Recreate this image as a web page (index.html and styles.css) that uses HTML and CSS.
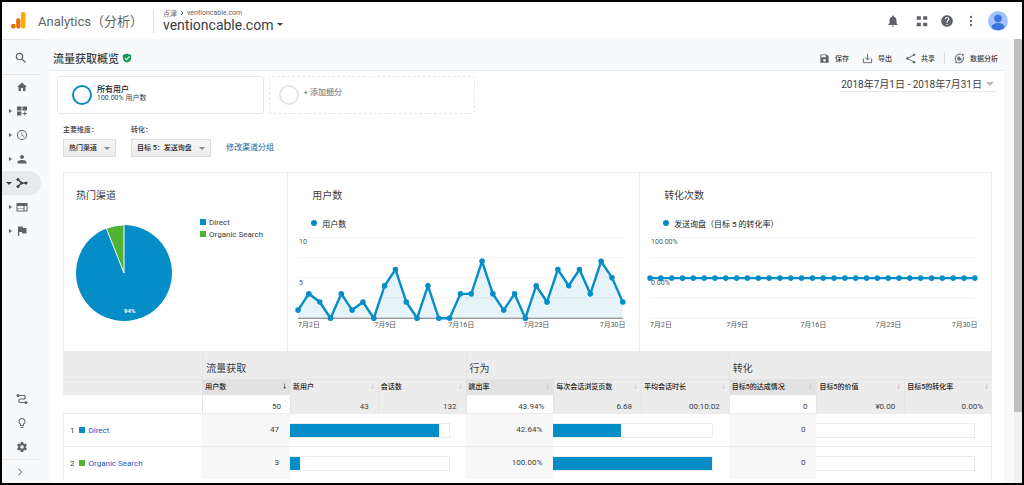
FILE: index.html
```html
<!DOCTYPE html>
<html lang="zh-CN">
<head>
    <meta charset="UTF-8">
    <meta name="viewport" content="width=device-width, initial-scale=1.0">
    <title>Analytics（分析）</title>
    <link rel="stylesheet" href="styles.css">
</head>
<body>

<header class="topbar">
    <svg class="logo" viewBox="0 0 32 36" aria-hidden="true">
        <rect x="21" y="0" width="10" height="35" rx="5" fill="#f9ab00"/>
        <rect x="11" y="13" width="9" height="22" rx="4" fill="#e37400"/>
        <circle cx="5" cy="30" r="5" fill="#e37400"/>
    </svg>
    <span class="product">Analytics（分析）</span>
    <div class="account">
        <div class="crumbs">点津
            <svg class="crumb-arrow" viewBox="0 0 8 8"><path d="M2 0l4 4-4 4" fill="none" stroke="#5f6368" stroke-width="1.6"/></svg>
            ventioncable.com</div>
        <button class="property">ventioncable.com <span class="caret"></span></button>
    </div>
    <div class="top-actions">
        <button class="icon-btn bell" aria-label="通知"><svg viewBox="0 0 24 24"><path d="M12 22c1.100 0 2-.9 2-2h-4c0 1.100.89 2 2 2zm6-6v-5c0-3.070-1.640-5.640-4.500-6.320V4c0-.83-.67-1.500-1.500-1.500s-1.500.67-1.500 1.500v.68C7.630 5.360 6 7.920 6 11v5l-2 2v1h16v-1l-2-2z"/></svg></button>
        <button class="icon-btn" aria-label="应用"><svg viewBox="0 0 24 24"><path d="M3 4h7v6H3zM14 4h7v6h-7zM3 15h7v6H3zM14 15h7v6h-7z"/></svg></button>
        <button class="icon-btn" aria-label="帮助"><svg viewBox="0 0 24 24"><path d="M12 2C6.480 2 2 6.480 2 12s4.480 10 10 10 10-4.480 10-10S17.520 2 12 2zm1 17h-2v-2h2v2zm2.070-7.750l-.9.920C13.450 12.900 13 13.500 13 15h-2v-.5c0-1.100.45-2.100 1.170-2.830l1.240-1.260c.37-.36.59-.86.59-1.410 0-1.100-.9-2-2-2s-2 .9-2 2H8c0-2.210 1.790-4 4-4s4 1.790 4 4c0 .88-.36 1.680-.93 2.250z"/></svg></button>
        <button class="icon-btn narrow" aria-label="更多"><svg viewBox="0 0 24 24"><circle cx="12" cy="4" r="2.300"/><circle cx="12" cy="12" r="2.300"/><circle cx="12" cy="20" r="2.300"/></svg></button>
        <button class="avatar" aria-label="账号">
            <svg viewBox="0 0 40 40"><circle cx="20" cy="20" r="20" fill="#a1c2fa"/><circle cx="20" cy="15" r="7.500" fill="#3b73e0"/><path d="M7 33c0-6 6-9 13-9s13 3 13 9c-3 4-8 5-13 5s-10-1-13-5z" fill="#3b73e0"/></svg>
        </button>
    </div>
</header>

<div class="layout">
    <nav class="sidebar">
        <a class="search" href="#" aria-label="搜索"><svg viewBox="0 0 24 24"><path d="M15.500 14h-.79l-.28-.27A6.470 6.470 0 0 0 16 9.500 6.500 6.500 0 1 0 9.500 16c1.610 0 3.090-.59 4.230-1.570l.27.28v.79l5 4.990L20.490 19l-4.990-5zm-6 0C7.010 14 5 11.990 5 9.500S7.010 5 9.500 5 14 7.010 14 9.500 11.990 14 9.500 14z"/></svg></a>
        <ul class="menu">
            <li><a href="#" aria-label="首页"><span></span><svg viewBox="0 0 24 24"><path d="M10 20v-6h4v6h5v-8h3L12 3 2 12h3v8z"/></svg></a></li>
            <li><a href="#" aria-label="自定义"><span class="arrow"></span><svg viewBox="0 0 24 24"><path d="M2 3h9v8H2zM13 3h9v8h-9zM2 13h9v8H2zM16.500 13h2v3h3v2h-3v3h-2v-3h-3v-2h3z"/></svg></a></li>
            <li><a href="#" aria-label="实时"><span class="arrow"></span><svg viewBox="0 0 24 24"><path d="M12 2a10 10 0 1 0 0 20 10 10 0 0 0 0-20zm0 18a8 8 0 1 1 0-16 8 8 0 0 1 0 16zm.5-13H11v6l5.200 3.200.8-1.300-4.500-2.700z"/></svg></a></li>
            <li><a href="#" aria-label="受众群体"><span class="arrow"></span><svg viewBox="0 0 24 24"><path d="M12 12c2.210 0 4-1.790 4-4s-1.790-4-4-4-4 1.790-4 4 1.790 4 4 4zm0 2c-3 0-9 1.340-9 4v3h18v-3c0-2.660-6-4-9-4z"/></svg></a></li>
            <li><a class="active" href="#" aria-label="流量获取"><span class="arrow open"></span><svg viewBox="0 0 24 24"><path d="M4 5l7 7-7 7M11 12h9" fill="none" stroke="#3c4043" stroke-width="2.500"/><circle cx="4" cy="5" r="3"/><circle cx="4" cy="19" r="3"/><circle cx="11" cy="12" r="3"/><circle cx="20" cy="12" r="3"/></svg></a></li>
            <li><a href="#" aria-label="行为"><span class="arrow"></span><svg viewBox="0 0 24 24"><path d="M1 4v17h22V4zm14 15H3v-4h12zm0-5H3v-4h12zm6 5h-4v-9h4z" fill-rule="evenodd"/></svg></a></li>
            <li><a href="#" aria-label="转化"><span class="arrow"></span><svg viewBox="0 0 24 24"><path d="M14 6l-.5-3H4v19h2.500v-8H12l.5 3H21V6z"/></svg></a></li>
        </ul>
        <ul class="menu menu-bottom">
            <li><a href="#" aria-label="归因"><span></span><svg viewBox="0 0 24 24"><path d="M4 5h11a3.500 3.500 0 0 1 0 7H9a3.500 3.500 0 0 0 0 7h11" fill="none" stroke="#5f6368" stroke-width="2.400"/><circle cx="4" cy="5" r="3"/><circle cx="20" cy="19" r="3"/></svg></a></li>
            <li><a href="#" aria-label="发现"><span></span><svg viewBox="0 0 24 24"><path d="M9 21c0 .55.45 1 1 1h4c.55 0 1-.45 1-1v-1H9v1zm3-19C8.140 2 5 5.140 5 9c0 2.380 1.190 4.470 3 5.740V17c0 .55.45 1 1 1h6c.55 0 1-.45 1-1v-2.260c1.810-1.270 3-3.360 3-5.740 0-3.860-3.140-7-7-7zm2.850 11.100l-.85.6V16h-4v-2.300l-.85-.6A5 5 0 0 1 7 9c0-2.760 2.240-5 5-5s5 2.240 5 5c0 1.630-.8 3.160-2.150 4.100z"/></svg></a></li>
            <li><a href="#" aria-label="管理"><span></span><svg viewBox="0 0 24 24"><path d="M19.430 12.980c.04-.32.07-.64.07-.98s-.03-.66-.07-.98l2.110-1.650c.19-.15.24-.42.12-.64l-2-3.460c-.12-.22-.39-.3-.61-.22l-2.490 1c-.52-.4-1.080-.73-1.690-.98l-.38-2.650A.49.49 0 0 0 14 2h-4c-.25 0-.46.18-.49.42l-.38 2.650c-.61.25-1.170.59-1.690.98l-2.490-1c-.23-.09-.49 0-.61.22l-2 3.460c-.13.22-.07.49.12.64l2.110 1.650c-.04.32-.07.65-.07.98s.03.66.07.98l-2.110 1.650c-.19.15-.24.42-.12.64l2 3.460c.12.22.39.3.61.22l2.490-1c.52.4 1.080.73 1.690.98l.38 2.650c.03.24.24.42.49.42h4c.25 0 .46-.18.49-.42l.38-2.650c.61-.25 1.170-.59 1.690-.98l2.490 1c.23.09.49 0 .61-.22l2-3.460c.12-.22.07-.49-.12-.64zM12 15.500a3.500 3.500 0 1 1 0-7 3.500 3.500 0 0 1 0 7z"/></svg></a></li>
        </ul>
        <button class="expand" aria-label="展开"><svg viewBox="0 0 24 24"><path d="M8 4l8 8-8 8" fill="none" stroke="#80868b" stroke-width="2.500"/></svg></button>
    </nav>

    <main class="main">
        <div class="titlebar">
            <h1>流量获取概览</h1>
            <svg class="shield" viewBox="0 0 24 24"><path d="M12 1L2 5v7c0 5.500 4.300 9.700 10 11 5.700-1.300 10-5.500 10-11V5z" fill="#0f9d58"/><path d="M7 12l4 4 7-8" fill="none" stroke="#fff" stroke-width="2.500"/></svg>
            <div class="tools">
                <button><svg viewBox="0 0 24 24"><path d="M17 3H3v18h18V7zm-5 16a3 3 0 1 1 0-6 3 3 0 0 1 0 6zm3-10H5V5h10z"/></svg>保存</button>
                <button><svg viewBox="0 0 24 24"><path d="M3 12v9h18v-9M12 2v13M7 10l5 5 5-5" fill="none" stroke="#5f6368" stroke-width="2"/></svg>导出</button>
                <button><svg viewBox="0 0 24 24"><path d="M20 4L5 12l15 8" fill="none" stroke="#5f6368" stroke-width="2"/><circle cx="20" cy="4" r="2.600"/><circle cx="5" cy="12" r="2.600"/><circle cx="20" cy="20" r="2.600"/></svg>共享</button>
                <button class="insights"><svg viewBox="0 0 24 24"><path d="M4 17a10 10 0 0 1 12-14M20 8A10 10 0 0 1 8 21" fill="none" stroke="#5f6368" stroke-width="2.200"/><path d="M12 7a5 5 0 1 0 5 5h-3a2 2 0 1 1-2-2z"/><circle cx="12" cy="12" r="2.500"/><circle cx="19" cy="4" r="2.200"/><circle cx="5" cy="20" r="2.200"/></svg>数据分析</button>
            </div>
        </div>

        <div class="panel">
            <div class="segments">
                <button class="segment">
                    <span class="ring"></span>
                    <span class="segment-text"><b>所有用户</b><small>100.00% 用户数</small></span>
                </button>
                <button class="segment segment-add">
                    <span class="ring"></span>
                    <span class="segment-text">+ 添加细分</span>
                </button>
                <button class="date-range">2018年7月1日 - 2018年7月31日 <span class="caret"></span></button>
            </div>

            <div class="filters">
                <div class="filter">
                    <label for="dimension">主要维度：</label>
                    <div class="select"><select id="dimension"><option>热门渠道</option></select></div>
                </div>
                <div class="filter">
                    <label for="goal">转化：</label>
                    <div class="select"><select id="goal"><option>目标 5：发送询盘</option></select></div>
                </div>
                <a href="#">修改渠道分组</a>
            </div>

            <div class="cards">
                <section class="card">
                    <h2>热门渠道</h2>
                    <div class="pie-row">
                        <svg class="pie" viewBox="0 0 96 96">
                            <circle cx="48" cy="48" r="48" fill="#058dc7"/>
                            <path d="M48 48L30.300 3.400A48 48 0 0 1 48 0z" fill="#50b432" stroke="#fff" stroke-width="1"/>
                            <text x="48" y="88">94%</text>
                        </svg>
                        <ul class="pie-legend">
                            <li><span class="swatch direct"></span>Direct</li>
                            <li><span class="swatch organic"></span>Organic Search</li>
                        </ul>
                    </div>
                </section>

                <section class="card">
                    <h2>用户数</h2>
                    <p class="legend"><span class="dot"></span>用户数</p>
                    <svg class="chart" viewBox="0 0 336 100">
                        <defs>
                            <marker id="point" markerUnits="userSpaceOnUse" markerWidth="6" markerHeight="6" refX="3" refY="3"><circle cx="3" cy="3" r="2.800" fill="#058dc7"/></marker>
                        </defs>
                        <path class="grid" d="M6 5.500H330M6 25.500H330M6 45.500H330M6 65.500H330"/>
                        <path class="area" d="M6 86V77.900L16.800 61.700 27.600 69.800 38.400 86 49.200 61.700 60 77.900 70.800 69.800 81.600 86 92.400 53.600 103.200 37.400 114 69.800 124.800 86 135.600 53.600 146.400 86 157.200 86 168 61.700 178.800 61.700 189.600 29.300 200.400 61.700 211.200 77.900 222 61.700 232.800 86 243.600 53.600 254.400 69.800 265.200 37.400 276 53.600 286.800 37.400 297.600 61.700 308.400 29.300 319.200 45.500 330 69.800V86z"/>
                        <path class="axis" d="M6 86H330"/>
                        <polyline class="line" points="6,77.900 16.800,61.700 27.600,69.800 38.400,86 49.200,61.700 60,77.900 70.800,69.800 81.600,86 92.400,53.600 103.200,37.400 114,69.800 124.800,86 135.600,53.600 146.400,86 157.200,86 168,61.700 178.800,61.700 189.600,29.300 200.400,61.700 211.200,77.900 222,61.700 232.800,86 243.600,53.600 254.400,69.800 265.200,37.400 276,53.600 286.800,37.400 297.600,61.700 308.400,29.300 319.200,45.500 330,69.800"/>
                        <text x="7" y="12">10</text>
                        <text x="7" y="53">5</text>
                        <text x="6" y="95">7月2日</text>
                        <text x="82" y="95">7月9日</text>
                        <text x="156" y="95">7月16日</text>
                        <text x="231" y="95">7月23日</text>
                        <text x="307" y="95">7月30日</text>
                    </svg>
                </section>

                <section class="card">
                    <h2>转化次数</h2>
                    <p class="legend"><span class="dot"></span>发送询盘（目标 5 的转化率）</p>
                    <svg class="chart" viewBox="0 0 336 100">
                        <path class="grid" d="M6 5.500H330M6 25.500H330M6 45.500H330M6 65.500H330M6 86H330"/>
                        <polyline class="line" points="6,46 16.800,46 27.600,46 38.400,46 49.200,46 60,46 70.800,46 81.600,46 92.400,46 103.200,46 114,46 124.800,46 135.600,46 146.400,46 157.200,46 168,46 178.800,46 189.600,46 200.400,46 211.200,46 222,46 232.800,46 243.600,46 254.400,46 265.200,46 276,46 286.800,46 297.600,46 308.400,46 319.200,46 330,46"/>
                        <text x="7" y="12">100.00%</text>
                        <text x="7" y="53">0.00%</text>
                        <text x="6" y="95">7月2日</text>
                        <text x="82" y="95">7月9日</text>
                        <text x="156" y="95">7月16日</text>
                        <text x="231" y="95">7月23日</text>
                        <text x="307" y="95">7月30日</text>
                    </svg>
                </section>
            </div>

            <table class="report">
                <colgroup>
                    <col class="col-name">
                    <col><col><col><col><col><col><col><col><col>
                </colgroup>
                <thead>
                    <tr class="groups">
                        <td></td>
                        <th colspan="3">流量获取</th>
                        <th colspan="3">行为</th>
                        <th colspan="3">转化</th>
                    </tr>
                    <tr class="heads">
                        <td></td>
                        <th class="sorted"><span>用户数<i class="on">🠗</i></span></th>
                        <th><span>新用户<i>🠗</i></span></th>
                        <th><span>会话数<i>🠗</i></span></th>
                        <th class="sorted"><span>跳出率<i>🠗</i></span></th>
                        <th><span>每次会话浏览页数<i>🠗</i></span></th>
                        <th><span>平均会话时长<i>🠗</i></span></th>
                        <th class="sorted"><span>目标5的达成情况<i>🠗</i></span></th>
                        <th><span>目标5的价值<i>🠗</i></span></th>
                        <th><span>目标5的转化率<i>🠗</i></span></th>
                    </tr>
                </thead>
                <tbody>
                    <tr class="totals">
                        <td class="lead"></td>
                        <td class="lead">50</td>
                        <td>43</td>
                        <td>132</td>
                        <td class="lead">43.94%</td>
                        <td>6.68</td>
                        <td>00:10:02</td>
                        <td class="lead">0</td>
                        <td>¥0.00</td>
                        <td>0.00%</td>
                    </tr>
                    <tr class="row">
                        <td class="name"><span>1</span><span class="swatch direct"></span><a href="#">Direct</a></td>
                        <td class="value">47</td>
                        <td colspan="2"><div class="bar"><div class="fill" style="width: 94%"></div></div></td>
                        <td class="value">42.64%</td>
                        <td colspan="2"><div class="bar"><div class="fill" style="width: 42.64%"></div></div></td>
                        <td class="value">0</td>
                        <td colspan="2"><div class="bar"></div></td>
                    </tr>
                    <tr class="row">
                        <td class="name"><span>2</span><span class="swatch organic"></span><a href="#">Organic Search</a></td>
                        <td class="value">3</td>
                        <td colspan="2"><div class="bar"><div class="fill" style="width: 6%"></div></div></td>
                        <td class="value">100.00%</td>
                        <td colspan="2"><div class="bar"><div class="fill" style="width: 100%"></div></div></td>
                        <td class="value">0</td>
                        <td colspan="2"><div class="bar"></div></td>
                    </tr>
                </tbody>
            </table>
        </div>
    </main>

    <div class="scrollbar"><div class="thumb"></div></div>
</div>

</body>
</html>
```
FILE: styles.css
```css
* {
    box-sizing: border-box;
}
body {
    margin: 0;
    height: 100vh;
    border: 2px solid #000;
    display: flex;
    flex-direction: column;
    overflow: hidden;
    background: #fff;
    color: #3c4043;
    font-family: Roboto, "Noto Sans CJK SC", sans-serif;
    font-size: 8px;
}
button {
    border: 0;
    padding: 0;
    background: none;
    color: inherit;
    font: inherit;
    white-space: nowrap;
}
a {
    text-decoration: none;
}
ul {
    margin: 0;
    padding: 0;
    list-style: none;
}
h1, h2, p {
    margin: 0;
}
svg {
    display: block;
    flex: none;
    fill: #5f6368;
}
.caret {
    display: inline-block;
    border: 3px solid transparent;
    border-top-color: currentColor;
    border-bottom: 0;
}

/* top bar */
.topbar {
    flex: none;
    height: 37px;
    display: flex;
    align-items: center;
    padding: 0 14px 0 9px;
}
.logo {
    width: 15px;
    height: 17px;
}
.product {
    margin-left: 12px;
    width: 115px;
    font-size: 13px;
    color: #5f6368;
    white-space: nowrap;
}
.account {
    border-left: 1px solid #e0e0e0;
    padding-left: 9px;
}
.crumbs {
    display: flex;
    align-items: center;
    gap: 3px;
    height: 8px;
    font-size: 7px;
    color: #5f6368;
}
.crumb-arrow {
    width: 4px;
    height: 4px;
}
.property {
    display: flex;
    align-items: center;
    gap: 4px;
    font-size: 14px;
    line-height: 16px;
}
.top-actions {
    margin-left: auto;
    display: flex;
    align-items: center;
    gap: 11px;
}
.icon-btn svg {
    width: 14px;
    height: 14px;
}
.bell {
    margin-right: 4px;
}
.narrow svg {
    width: 12px;
    height: 12px;
}
.avatar svg {
    width: 20px;
    height: 20px;
}

.layout {
    flex: 1;
    min-height: 0;
    display: flex;
    background: #f8f9fb;
}

/* side navigation */
.sidebar {
    flex: none;
    width: 39px;
    margin-right: 10px;
    display: flex;
    flex-direction: column;
    border-top: 1px solid #e4e4e4;
}
.search {
    height: 35px;
    padding: 11px 12px;
    border-bottom: 1px solid #e4e4e4;
}
.search svg {
    width: 14px;
    height: 14px;
}
.menu a {
    height: 24px;
    display: grid;
    grid-template-columns: 10px 12px;
    gap: 4px;
    align-items: center;
}
.menu a.active {
    background: #e8eaed;
    border-radius: 0 12px 12px 0;
}
.menu svg {
    width: 12px;
    height: 12px;
}
.active svg {
    fill: #3c4043;
}
.arrow {
    justify-self: end;
    border: 2px solid transparent;
    border-left: 3px solid #5f6368;
    border-right: 0;
}
.arrow.open {
    border: 3px solid transparent;
    border-top-color: #3c4043;
    border-bottom: 0;
}
.menu-bottom {
    margin-top: auto;
}
.expand {
    height: 24px;
    padding-left: 13px;
    border-top: 1px solid #e4e4e4;
}
.expand svg {
    width: 10px;
    height: 10px;
}

/* report */
.main {
    flex: 1;
    min-width: 0;
    display: flex;
    flex-direction: column;
}
.titlebar {
    flex: none;
    height: 31px;
    display: flex;
    align-items: center;
    padding: 7px 6px 0 2px;
}
h1 {
    font-size: 11px;
    font-weight: 500;
}
.shield {
    width: 10px;
    height: 10px;
    margin-left: 3px;
}
.tools {
    margin-left: auto;
    margin-right: 10px;
    display: flex;
    gap: 13px;
    font-size: 7px;
    font-weight: 500;
}
.tools button {
    display: flex;
    align-items: center;
    gap: 5px;
    height: 12px;
}
.tools svg {
    width: 11px;
    height: 11px;
}
.tools .insights {
    margin-left: -4px;
    padding-left: 9px;
    border-left: 1px solid #dadce0;
}
.panel {
    flex: 1;
    margin-right: 10px;
    padding: 5px 12px 0;
    background: #fff;
    border-top: 1px solid #e8eaed;
}
.segments {
    display: flex;
    gap: 5px;
    margin: 0 -4px 0 -6px;
}
.segment {
    width: 22%;
    height: 38px;
    display: flex;
    align-items: center;
    gap: 5px;
    padding-left: 14px;
    border: 1px solid #e8e8e8;
    border-radius: 3px;
    text-align: left;
}
.segment-text {
    display: flex;
    flex-direction: column;
    line-height: 9px;
    padding-bottom: 2px;
}
.segment-text b {
    font-weight: 500;
    color: #222;
}
.segment-text small {
    font-size: 7px;
}
.ring {
    width: 20px;
    height: 20px;
    border: 2px solid #058dc7;
    border-radius: 50%;
}
.segment-add {
    border-style: dashed;
    padding-left: 9px;
    color: #666;
}
.segment-add .segment-text {
    padding-bottom: 5px;
}
.segment-add .ring {
    border-color: #e4e4e4;
}
.date-range {
    margin-left: auto;
    align-self: flex-start;
    height: 16px;
    display: flex;
    align-items: center;
    gap: 4px;
    padding: 0 2px;
    border-bottom: 1px solid #e8e8e8;
    font-size: 10px;
}
.date-range .caret {
    border-width: 4px 4px 0;
    border-top-color: #bbb;
}
.filters {
    display: flex;
    align-items: flex-end;
    gap: 15px;
    margin: 11px 0 15px;
}
.filter {
    display: flex;
    flex-direction: column;
    gap: 3px;
    font-size: 7px;
    font-weight: 500;
}
.filter label {
    height: 11px;
    line-height: 11px;
}
.select {
    position: relative;
}
.select::after {
    content: "";
    position: absolute;
    top: 8px;
    right: 6px;
    border: 3px solid transparent;
    border-top-color: #888;
    border-bottom: 0;
    pointer-events: none;
}
select {
    display: block;
    appearance: none;
    height: 18px;
    padding: 0 18px 0 5px;
    border: 1px solid #dcdcdc;
    border-radius: 0;
    background: linear-gradient(#f6f6f6, #ececec);
    color: #222;
    font: inherit;
}
.filters a {
    line-height: 18px;
    color: #15699e;
}

.cards {
    display: grid;
    grid-template-columns: 224fr 353fr 353fr;
    border: 1px solid #ebebeb;
    border-bottom: 0;
}
.card {
    height: 178px;
    padding-top: 15px;
}
.card + .card {
    border-left: 1px solid #ebebeb;
}
h2 {
    padding-left: 24px;
    font-size: 10px;
    font-weight: 400;
    line-height: 16px;
}
.card:first-child h2 {
    padding-left: 12px;
}
.pie-row {
    display: flex;
    gap: 28px;
    margin: 12px 0 0 12px;
}
.pie {
    width: 96px;
    height: 96px;
    margin-top: 9px;
}
.pie text {
    fill: #fff;
    font-size: 6px;
    font-weight: 700;
}
.pie-legend li {
    display: flex;
    align-items: center;
    gap: 3px;
    height: 12px;
}
.swatch {
    width: 6px;
    height: 6px;
}
.direct {
    background: #058dc7;
}
.organic {
    background: #50b432;
}
.legend {
    display: flex;
    align-items: center;
    gap: 5px;
    height: 12px;
    margin-top: 13px;
    padding-left: 23px;
    color: #222;
}
.dot {
    width: 6px;
    height: 6px;
    border-radius: 50%;
    background: #058dc7;
}
.chart {
    width: 96%;
    margin: 3px 0 0 4px;
}
.chart text {
    font-size: 7px;
    fill: #555;
}
.grid {
    stroke: #f4f4f4;
    fill: none;
}
.axis {
    stroke: #777;
}
.area {
    fill: #058dc7;
    fill-opacity: .1;
}
.line {
    fill: none;
    stroke: #058dc7;
    stroke-width: 2.4;
    marker-start: url(#point);
    marker-mid: url(#point);
    marker-end: url(#point);
}

/* channel table */
.report {
    width: 100%;
    table-layout: fixed;
    border-collapse: separate;
    border-spacing: 0;
}
.col-name {
    width: 15%;
}
.report th, .report td {
    padding: 0;
    font-weight: 400;
    text-align: left;
}
.groups, .heads {
    background: #ececec;
}
.report .groups th {
    height: 28px;
    padding: 8px 0 0 3px;
    font-size: 10px;
    line-height: 20px;
}
.groups th, .heads th, .totals td + td {
    border-left: 1px solid #e4e4e4;
}
.heads th, .heads td {
    height: 16px;
    border-top: 1px solid #e4e4e4;
}
.heads span {
    display: flex;
    justify-content: space-between;
    padding: 0 4px 0 2px;
    font-size: 7px;
    font-weight: 500;
    line-height: 15px;
    color: #222;
    white-space: nowrap;
}
.heads i {
    font-family: "DejaVu Sans", sans-serif;
    font-style: normal;
    color: #c4c4c4;
}
.heads i.on {
    color: #333;
}
.heads .sorted {
    background: #e2e2e2;
}
.report .totals td {
    height: 18px;
    padding: 4px 9px 0 0;
    background: #ececec;
    text-align: right;
}
.report .totals .lead {
    background: #fff;
}
.row td {
    height: 33px;
    border-top: 1px solid #ebebeb;
}
.row td:last-child {
    border-right: 1px solid #ebebeb;
}
.report .name {
    border-left: 1px solid #ebebeb;
    padding-left: 6px;
}
.name span, .name a {
    display: inline-block;
    margin-right: 4px;
    vertical-align: middle;
}
.name a {
    color: #2a56c6;
}
.report .value {
    padding: 0 11px 2px 0;
    background: #f7f7f7;
    text-align: right;
}
.bar {
    width: 91%;
    height: 15px;
    border: 1px solid #ebebeb;
    border-left: 0;
}
.fill {
    height: 100%;
    background: #058dc7;
}

.scrollbar {
    flex: none;
    width: 8px;
    background: #f1f1f1;
}
.thumb {
    height: 84%;
    background: #c1c1c1;
}
```
